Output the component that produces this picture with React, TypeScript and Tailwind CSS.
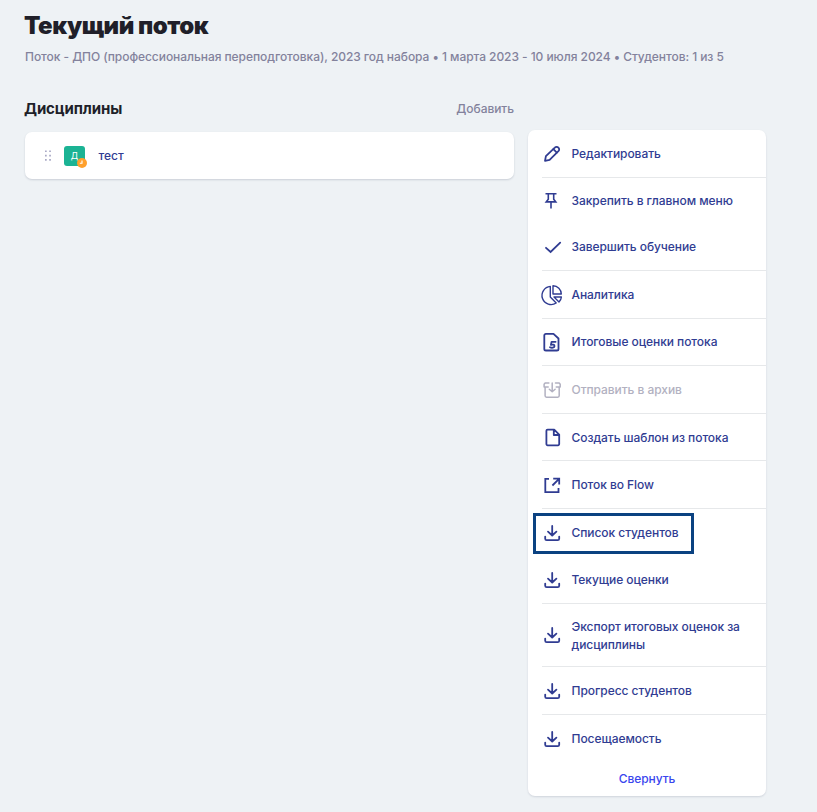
import type { ReactNode } from "react";

type IconProps = { children: ReactNode; width?: number };

function Icon({ children, width = 1.7 }: IconProps) {
  return (
    <svg
      className="size-6 shrink-0"
      viewBox="0 0 24 24"
      fill="none"
      stroke="currentColor"
      strokeWidth={width}
      strokeLinecap="round"
      strokeLinejoin="round"
    >
      {children}
    </svg>
  );
}

const pencil = (
  <Icon width={1.8}>
    <path d="M5 18.8l.9-4.6L14.8 5.6a2.5 2.5 0 0 1 3.6 0a2.5 2.5 0 0 1 0 3.6L9.6 17.8z" />
    <path d="M13.4 7.2l3.4 3.4" />
  </Icon>
);

const pin = (
  <Icon width={1.6}>
    <path d="M6.3 4.8h9.4M8.3 4.8v5.4L6.2 12.9h9.6l-2.1-2.7V4.8M11 13v5.6" strokeLinecap="square" strokeLinejoin="miter" />
  </Icon>
);

const check = (
  <Icon width={1.8}>
    <path d="M6 12.8l4.6 4.2L20.2 7.6" strokeLinejoin="miter" />
  </Icon>
);

const pie = (
  <Icon width={1.4}>
    <path d="M10.3 3.4A9.1 9.1 0 1 0 16.2 20L10.3 14z" />
    <path d="M13 2.7a8.3 8.3 0 0 1 8.3 8.3H13z" />
    <path d="M14 14h7.4a8 8 0 0 1-2.4 5z" />
  </Icon>
);

const gradeSheet = (
  <Icon width={1.8}>
    <path d="M5.9 3.9h7.6l5 4.6v10.4a1.6 1.6 0 0 1-1.6 1.6h-11a1.6 1.6 0 0 1-1.6-1.6V5.5a1.6 1.6 0 0 1 1.6-1.6z" />
    <path d="M15.6 11.8h-4l-.7 3.1c1.7-.7 3.7-.3 3.6 1.2c-.1 1.6-2.7 2.1-4.5 1.1" strokeWidth={1.8} />
  </Icon>
);

const archive = (
  <Icon width={1.5}>
    <path d="M8.9 5H5.1L4.1 6.2V9.1H8.2M15.5 5h3.7l1 1.2V9.1H16.2M5.1 9.3v8.5a1.4 1.4 0 0 0 1.4 1.4h11.3a1.4 1.4 0 0 0 1.4-1.4V9.3M12.2 4.9v8.6M9.3 11.2l2.9 2.6l2.9-2.6" />
  </Icon>
);

const file = (
  <Icon width={1.8}>
    <path d="M7.6 4.6h6.6l5 5v9.5a1.2 1.2 0 0 1-1.2 1.2H7.6a1.2 1.2 0 0 1-1.2-1.2V5.8a1.2 1.2 0 0 1 1.2-1.2zM13.8 4.8V10h5.2" />
  </Icon>
);

const external = (
  <Icon width={1.8}>
    <path d="M9 5.9H5.3v13.2h13.2v-4M13.2 5.6h6v5.9M18.8 6.1l-6.4 6.4" strokeLinejoin="miter" strokeLinecap="butt" />
  </Icon>
);

const download = (
  <Icon width={1.8}>
    <path d="M12.2 5v8.8M8 10.6l4.2 3.9l4.2-3.9M5.2 15.6v2.1a1.5 1.5 0 0 0 1.5 1.5h11a1.5 1.5 0 0 0 1.5-1.5v-2.1" />
  </Icon>
);

type Item = {
  label: string;
  icon: ReactNode;
  size: string;
  divider?: boolean;
  muted?: boolean;
  marked?: boolean;
  lowered?: boolean;
};

const items: Item[] = [
  { label: "Редактировать", icon: pencil, size: "h-12", divider: true },
  { label: "Закрепить в главном меню", icon: pin, size: "h-[46px]" },
  { label: "Завершить обучение", icon: check, size: "h-[47px]", divider: true },
  { label: "Аналитика", icon: pie, size: "h-12", divider: true },
  { label: "Итоговые оценки потока", icon: gradeSheet, size: "h-[47px]", divider: true },
  { label: "Отправить в архив", icon: archive, size: "h-12", divider: true, muted: true },
  { label: "Создать шаблон из потока", icon: file, size: "h-[47px]", divider: true, lowered: true },
  { label: "Поток во Flow", icon: external, size: "h-12", divider: true },
  { label: "Список студентов", icon: download, size: "h-[47px]", marked: true },
  { label: "Текущие оценки", icon: download, size: "h-12", divider: true },
  { label: "Экспорт итоговых оценок за дисциплины", icon: download, size: "h-[63px]", divider: true, lowered: true },
  { label: "Прогресс студентов", icon: download, size: "h-12", divider: true },
  { label: "Посещаемость", icon: download, size: "h-[47px]" },
];

function MenuItem({ item }: { item: Item }) {
  return (
    <li
      className={`relative ml-3.5 flex items-center ${item.size} ${
        item.divider ? "border-b border-[#e6e8ea]" : ""
      } ${item.muted ? "text-[#b2b1c1]" : "text-[#303c92]"}`}
    >
      <span className="-ml-0.5 flex">{item.icon}</span>
      <span
        className={`ml-[7.5px] w-[180px] text-[12px] leading-[18px] font-medium tracking-[-0.06px] ${
          item.lowered ? "pt-0.5" : ""
        }`}
      >
        {item.label}
      </span>
      {item.marked && <span className="absolute top-[4px] -left-[9px] h-[41px] w-[161px] border-3 border-[#0b4281]" />}
    </li>
  );
}

export default function App() {
  return (
    <main className="h-[812px] w-[817px] overflow-hidden bg-[#eef2f5] pl-[25px] font-['Inter',sans-serif]">
      <h1 className="-ml-px pt-2 text-[24px] leading-9 font-black tracking-[-0.48px] text-[#201f29]">Текущий поток</h1>
      <p className="mt-1 text-[12px] leading-[18px] font-medium tracking-[-0.055px] whitespace-nowrap text-[#83829c]">
        Поток - ДПО (профессиональная переподготовка), 2023 год набора • 1 марта 2023 - 10 июля 2024 • Студентов: 1 из 5
      </p>
      <div className="mt-[31px] flex items-start gap-3.5">
        <section className="w-[489px]">
          <header className="flex h-[23px] items-center justify-between">
            <h2 className="-ml-px text-[15px] leading-[22px] font-bold tracking-[-0.12px] text-[#201f29]">Дисциплины</h2>
            <button className="text-[12px] leading-[18px] font-medium tracking-[-0.05px] text-[#83829c]">Добавить</button>
          </header>
          <div className="mt-3 flex h-[47px] items-center rounded-[7px] bg-white pl-5 shadow-[0_1px_2px_rgba(40,50,80,0.18)]">
            <svg className="h-3 w-[6px]" viewBox="0 0 6 12" fill="#a9a9c5">
              <path d="M0 .4h1.7v1.7H0zM4.2.4h1.7v1.7H4.2zM0 4.7h1.7v1.7H0zM4.2 4.7h1.7v1.7H4.2zM0 9h1.7v1.7H0zM4.2 9h1.7v1.7H4.2z" />
            </svg>
            <div className="relative ml-[13px] flex h-5 w-[21px] items-center justify-center rounded-[3px] bg-[#1bb394] text-[9px] text-white">
              Д
              <svg className="absolute -right-[2px] -bottom-[2px] size-[10px]" viewBox="0 0 10 10">
                <circle cx="5" cy="5" r="5" fill="#ffa02c" />
                <path d="M5 2.6v2.7H2.8" fill="none" stroke="white" strokeWidth="1.1" />
              </svg>
            </div>
            <span className="ml-[13.5px] text-[12px] leading-[18px] font-medium text-[#303c92]">тест</span>
          </div>
        </section>
        <aside className="mt-[33px] h-[666px] w-[238px] rounded-[7px] bg-white shadow-[0_1px_2px_rgba(40,50,80,0.15)]">
          <ul>
            {items.map((item) => (
              <MenuItem key={item.label} item={item} />
            ))}
          </ul>
          <button className="mt-2 block w-full text-center text-[12px] leading-[18px] font-medium tracking-[-0.05px] text-[#3a46ee]">
            Свернуть
          </button>
        </aside>
      </div>
    </main>
  );
}
